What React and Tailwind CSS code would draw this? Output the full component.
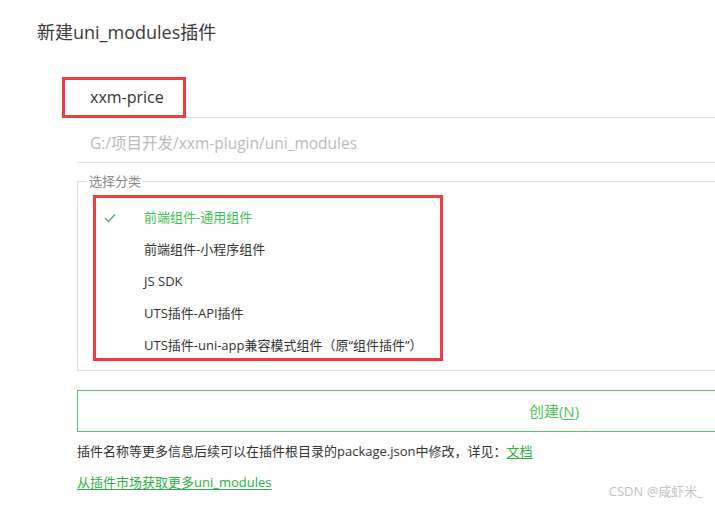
const categories = [
  '前端组件-通用组件',
  '前端组件-小程序组件',
  'JS SDK',
  'UTS插件-API插件',
  'UTS插件-uni-app兼容模式组件（原“组件插件”）',
];

function Check() {
  return (
    <svg width="12" height="10" viewBox="0 0 12 10" fill="none" stroke="#4aae6a" strokeWidth="1.3">
      <polyline points="1,5 4.5,8.5 11,1.5" />
    </svg>
  );
}

export default function App() {
  const font = { fontFamily: '"Open Sans", "Noto Sans CJK SC", sans-serif' };
  return (
    <div className="relative w-[715px] h-[507px] overflow-hidden bg-white" style={font}>
      <h1 className="pl-[37px] pt-[19px] text-[18px] leading-[26px] text-[#3a3a3a]">新建uni_modules插件</h1>

      <div className="ml-[77px] mt-[32px] w-[954px]">
        {/* plugin name */}
        <div className="relative h-[41px] border-b border-[#e0e0e0] flex items-center pl-[13px] text-[16px] text-[#333]">
          <div className="absolute left-[-15px] top-0 w-[124px] h-[41px] border-[3px] border-[#f03c3c]" />
          xxm-price
        </div>

        {/* location */}
        <div className="h-[45px] border-b border-[#e0e0e0] flex items-center pt-[7px] pl-[13px] text-[15.5px] text-[#bbbbbb]">
          G:/项目开发/xxm-plugin/uni_modules
        </div>

        {/* category */}
        <fieldset className="mt-[10px] border border-[#dddddd] pb-[9px] pt-[6px]">
          <legend className="ml-[9px] px-[2px] text-[13px] leading-[16px] text-[#8a8a8a]">选择分类</legend>
          <div className="ml-[15px] w-[350px] h-[166px] border-[3px] border-[#f03c3c] pt-[4px]">
            {categories.map((c, i) => (
              <div key={c} className="h-[32px] flex items-center text-[13px]">
                <div className="w-[48px] pl-[8px] flex items-center">{i === 0 && <Check />}</div>
                <span className={i === 0 ? 'text-[#3fbf55]' : 'text-[#333]'}>{c}</span>
              </div>
            ))}
          </div>
        </fieldset>

        <button className="mt-[19px] w-full h-[42px] border border-[#55c464] text-[15px] text-[#4cc45c]">
          创建(<span className="underline underline-offset-2">N</span>)
        </button>

        <p className="mt-[8px] text-[13px] leading-[22px] text-[#333]">
          插件名称等更多信息后续可以在插件根目录的package.json中修改，详见：
          <a className="text-[#2fae45] underline underline-offset-2">文档</a>
        </p>
        <p className="mt-[9px] text-[13px] leading-[22px]">
          <a className="text-[#2fae45] underline underline-offset-2">从插件市场获取更多uni_modules</a>
        </p>
      </div>

      <div className="absolute right-[12px] bottom-[6px] text-[13px] text-[#c4c4c4]">CSDN @咸虾米_</div>
    </div>
  );
}
